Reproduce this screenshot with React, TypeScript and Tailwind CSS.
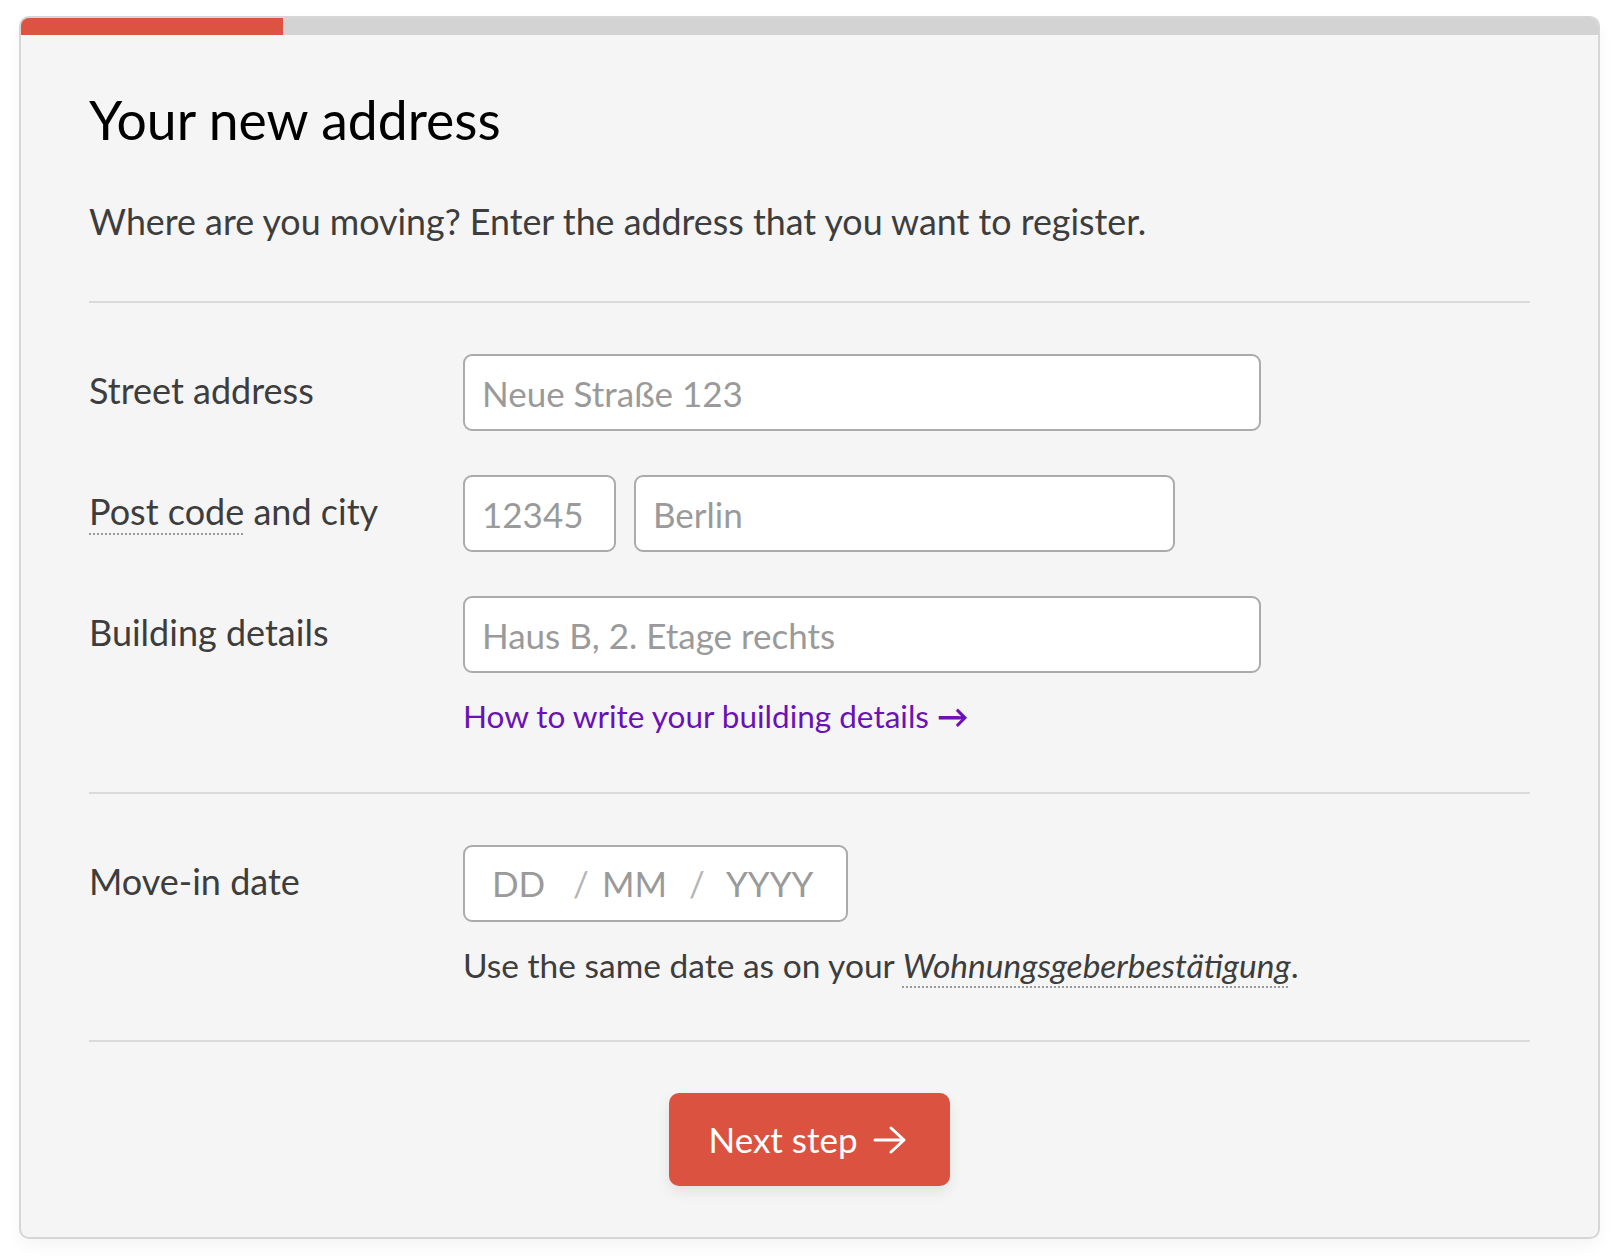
const inputCls =
  "h-[77px] rounded-[9px] border-2 border-[#ababab] bg-white px-[17px] text-[35px] text-[#333] placeholder:text-[#9a9a9a] outline-none";

const labelCls = "w-[374px] pt-[16px] text-[36px] leading-[40px] text-[#3d3d3d]";

export default function App() {
  return (
    <div className="min-h-screen bg-white pl-[19px] pr-[20px] pt-4 pb-5 font-['Lato',sans-serif]">
      <div className="overflow-hidden rounded-[10px] border-2 border-[#d6d6d6] bg-[#f5f5f5] shadow-[0_8px_16px_rgba(0,0,0,0.04)]">
        {/* progress */}
        <div className="h-[17px] bg-[#d3d3d3]">
          <div className="h-full w-[262px] bg-[#dc5341]" />
        </div>

        <div className="px-[68px] pb-[51px]">
          <h1 className="mt-[54px] text-[53.5px] leading-[60px] text-black">Your new address</h1>
          <p className="mt-[53px] text-[35.8px] leading-[40px] text-[#3d3d3d]">
            Where are you moving? Enter the address that you want to register.
          </p>

          <div className="mt-[59px] h-[2px] bg-[#dadada]" />

          {/* address rows */}
          <div className="mt-[51px] flex flex-col gap-[44px]">
            <div className="flex items-start">
              <label className={labelCls}>Street address</label>
              <input className={`${inputCls} w-[798px]`} placeholder="Neue Straße 123" />
            </div>
            <div className="flex items-start">
              <label className={labelCls}>
                <span className="underline decoration-dotted decoration-[#9a9a9a] decoration-2 underline-offset-[8px]">Post code</span> and city
              </label>
              <div className="flex gap-[18px]">
                <input className={`${inputCls} w-[153px]`} placeholder="12345" />
                <input className={`${inputCls} w-[541px]`} placeholder="Berlin" />
              </div>
            </div>
            <div className="flex items-start">
              <label className={labelCls}>Building details</label>
              <div className="flex flex-col">
                <input className={`${inputCls} w-[798px]`} placeholder="Haus B, 2. Etage rechts" />
                <a className="mt-[23px] text-[31.5px] leading-[40px] text-[#6a11b8]" href="#">
                  How to write your building details <span className="font-bold">→</span>
                </a>
              </div>
            </div>
          </div>

          <div className="mt-[56px] h-[2px] bg-[#dadada]" />

          {/* move-in date */}
          <div className="mt-[51px] flex items-start">
            <label className={labelCls}>Move-in date</label>
            <div className="flex flex-col">
              <div className="flex h-[77px] w-[385px] items-center rounded-[9px] border-2 border-[#ababab] bg-white pl-[27px] text-[35px] text-[#9a9a9a]">
                <span className="w-[81px]">DD</span>
                <span className="w-[29px] text-[#b5b5b5]">/</span>
                <span className="w-[87px]">MM</span>
                <span className="w-[37px] text-[#b5b5b5]">/</span>
                <span>YYYY</span>
              </div>
              <p className="mt-[23px] text-[33.5px] leading-[40px] text-[#3d3d3d]">
                Use the same date as on your{" "}
                <em className="underline decoration-dotted decoration-[#9a9a9a] decoration-2 underline-offset-[8px]">Wohnungsgeberbestätigung</em>.
              </p>
            </div>
          </div>

          <div className="mt-[55px] h-[2px] bg-[#dadada]" />

          <div className="mt-[51px] flex justify-center">
            <button className="flex h-[93px] w-[281px] items-center justify-center gap-[15px] rounded-[10px] bg-[#db5340] pr-[4px] text-[35px] text-white shadow-[0_6px_14px_rgba(0,0,0,0.08)]">
              Next step
              <svg width="34" height="30" viewBox="0 0 34 30" fill="none" stroke="currentColor" strokeWidth="3" strokeLinecap="round" strokeLinejoin="round">
                <path d="M2 15h29M18 3l13 12-13 12" />
              </svg>
            </button>
          </div>
        </div>
      </div>
    </div>
  );
}
